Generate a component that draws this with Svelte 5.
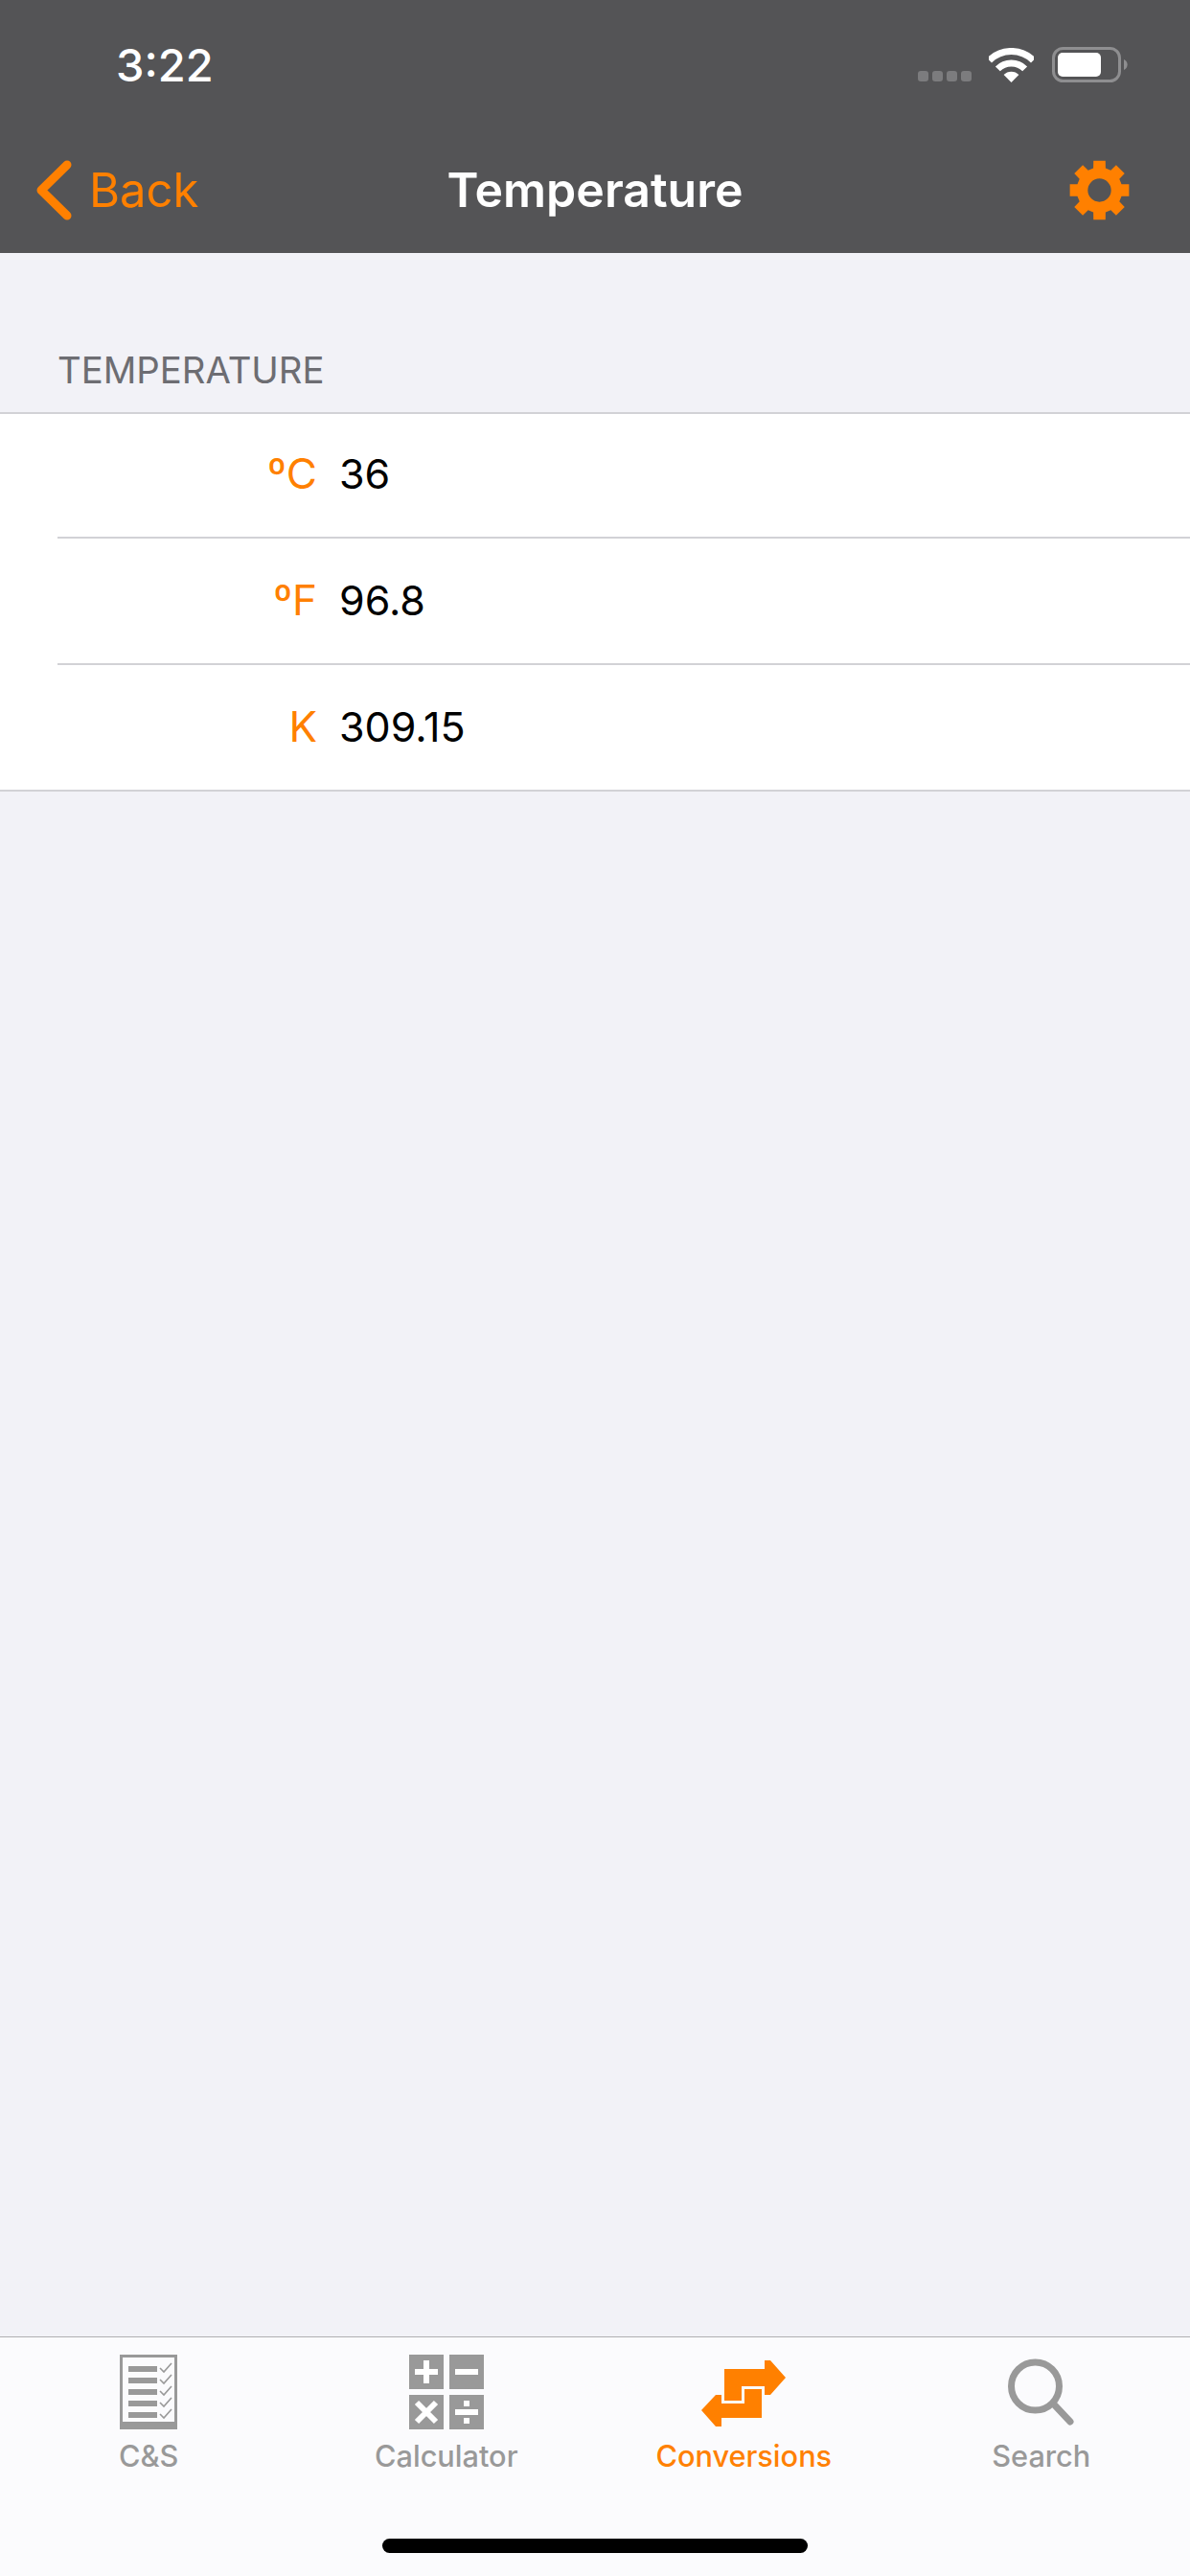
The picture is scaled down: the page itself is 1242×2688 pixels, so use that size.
<script>
	const rows = [
		{ unit: 'ºC', value: '36' },
		{ unit: 'ºF', value: '96.8' },
		{ unit: 'K', value: '309.15' }
	];

	const tabs = ['C&S', 'Calculator', 'Conversions', 'Search'];
	const checkRows = [0, 12, 24, 36, 48];

	// 8 teeth around the centre of a 62px box
	function gearPath() {
		const c = 31;
		const pts = [];
		for (let i = 0; i < 8; i++) {
			const a = (i * Math.PI) / 4 - Math.PI / 2;
			const at = (r, d) => `${(c + r * Math.cos(a + d)).toFixed(2)} ${(c + r * Math.sin(a + d)).toFixed(2)}`;
			pts.push(at(23.5, -0.27), at(31, -0.2), at(31, 0.2), at(23.5, 0.27));
		}
		return `M${pts.join('L')}Z M${c - 12} ${c}a12 12 0 1 0 24 0a12 12 0 1 0 -24 0Z`;
	}
</script>

<div class="page">
	<header class="top">
		<div class="status">
			<span class="time">3:22</span>
			<div class="status-icons">
				<div class="dots"><i></i><i></i><i></i><i></i></div>
				<svg width="47" height="36" viewBox="0 0 47 36">
					<path d="M0.5 13A32.5 32.5 0 0 1 46.5 13" fill="none" stroke="#fff" stroke-width="7" />
					<path d="M9.36 21.86A20 20 0 0 1 37.64 21.86" fill="none" stroke="#fff" stroke-width="7" />
					<path d="M23.5 36L15.6 28.1A11 11 0 0 1 31.4 28.1Z" fill="#fff" />
				</svg>
				<svg width="79" height="37" viewBox="0 0 79 37">
					<rect x="1.5" y="1.5" width="69" height="34" rx="10" fill="none" stroke="#8e8e90" stroke-width="3" />
					<rect x="6" y="6" width="45" height="25" rx="5" fill="#fff" />
					<path d="M75 13a6 6 0 0 1 0 11Z" fill="#8e8e90" />
				</svg>
			</div>
		</div>
		<nav class="nav">
			<div class="back">
				<svg width="37" height="63" viewBox="0 0 37 63">
					<path d="M32 5L5 31.5L32 58" fill="none" stroke="#ff8000" stroke-width="9" stroke-linecap="round" stroke-linejoin="round" />
				</svg>
				<span>Back</span>
			</div>
			<h1>Temperature</h1>
			<svg class="gear" width="63" height="63" viewBox="0 0 62 62">
				<path d={gearPath()} fill="#ff8000" fill-rule="evenodd" />
			</svg>
		</nav>
	</header>

	<main class="content">
		<div class="section-title">TEMPERATURE</div>
		<div class="list">
			{#each rows as row}
				<div class="row">
					<span class="unit">{row.unit}</span>
					<span class="value">{row.value}</span>
				</div>
			{/each}
		</div>
	</main>

	<footer class="tabbar">
		<div class="tabs">
			{#each tabs as tab, i}
				<div class="tab" class:active={i === 2}>
					{#if i === 0}
						<svg width="60" height="78" viewBox="0 0 60 78">
							<path fill-rule="evenodd" d="M0 0H60V78H0ZM3 3V70H57V3Z" fill="#999" />
							{#each checkRows as y}
								<rect x="9" y={12 + y} width="30" height="6" fill="#999" />
								<path d="M42 {14 + y}L46 {18 + y}L54 {9 + y}" fill="none" stroke="#999" stroke-width="1.6" />
							{/each}
						</svg>
					{:else if i === 1}
						<svg width="78" height="78" viewBox="0 0 78 78">
							<path fill="#999" d="M0 0H36V36H0ZM42 0H78V36H42ZM0 42H36V78H0ZM42 42H78V78H42Z" />
							<path fill="#fff" d="M15 6H21V15H30V21H21V30H15V21H6V15H15ZM48 15H72V21H48ZM48 57H72V63H48ZM57 48H63V54H57ZM57 66H63V72H57Z" />
							<path d="M8 50L28 70M28 50L8 70" stroke="#fff" stroke-width="6" />
						</svg>
					{:else if i === 2}
						<svg width="88" height="78" viewBox="0 0 88 78">
							<path fill="#ff8000" d="M24 15H66V6H72L88 24L72 42H66V33H42V48H24Z" />
							<path fill="#ff8000" d="M45 36H63V66H21V75H15L0 58L15 42H21V51H45Z" />
						</svg>
					{:else}
						<svg width="69" height="78" viewBox="0 0 69 78">
							<circle cx="28.5" cy="33" r="25" fill="none" stroke="#999" stroke-width="7" />
							<path d="M49 53L65 70" stroke="#999" stroke-width="7" stroke-linecap="round" />
						</svg>
					{/if}
					<span class="tab-label">{tab}</span>
				</div>
			{/each}
		</div>
		<div class="home-bar"></div>
	</footer>
</div>

<style>
	:global(body) {
		margin: 0;
		background: #f2f2f7;
	}

	.page {
		display: flex;
		flex-direction: column;
		height: 2688px;
		font-family: Inter, "Liberation Sans", sans-serif;
		background: #f2f2f7;
	}

	.top {
		height: 264px;
		background: #545456;
	}

	.status {
		display: flex;
		justify-content: space-between;
		height: 132px;
		box-sizing: border-box;
		padding: 38px 65px 0 121px;
		color: #fff;
	}

	.time {
		font-size: 47px;
		font-weight: 500;
		line-height: 60px;
	}

	.status-icons {
		display: flex;
		align-items: flex-end;
		gap: 19px;
		align-self: flex-start;
		margin-top: 11px;
	}

	.dots {
		display: flex;
		gap: 4px;
		margin: 0 -1px 1px 0;
	}

	.dots i {
		width: 11px;
		height: 11px;
		border-radius: 3px;
		background: #7c7c7e;
	}

	.nav {
		display: grid;
		grid-template-columns: 1fr auto 1fr;
		align-items: center;
		height: 132px;
		padding: 0 38px;
	}

	.back {
		display: flex;
		align-items: center;
		gap: 18px;
		color: #ff8000;
		font-size: 49px;
	}

	.nav h1 {
		margin: 0;
		color: #fff;
		font-size: 50px;
		font-weight: 600;
	}

	.gear {
		justify-self: end;
		margin-right: 25px;
	}

	.content {
		flex: 1;
	}

	.section-title {
		padding: 99px 0 21px 60px;
		font-size: 38.3px;
		line-height: 46px;
		color: #6d6d72;
	}

	.list {
		background: #fff;
		box-shadow: inset 0 2px #d2d2d6;
	}

	.row {
		display: flex;
		align-items: center;
		gap: 23px;
		height: 132px;
		box-sizing: border-box;
		border-bottom: 2px solid #d2d2d6;
		margin-left: 60px;
		padding-bottom: 3px;
	}

	.row:last-child {
		margin-left: 0;
		padding-left: 60px;
	}

	.unit {
		width: 271px;
		text-align: right;
		color: #ff8000;
		font-size: 44px;
	}

	.value {
		color: #000;
		font-size: 43px;
	}

	.tabbar {
		height: 250px;
		box-sizing: border-box;
		border-top: 1px solid #b0b0b2;
		background: #fbfbfd;
	}

	.tabs {
		display: grid;
		grid-template-columns: repeat(4, 1fr);
		padding-top: 18px;
	}

	.tab {
		display: flex;
		flex-direction: column;
		align-items: center;
		gap: 10px;
		color: #999;
	}

	.tab.active {
		color: #ff8000;
	}

	.tab-label {
		font-size: 30.7px;
		font-weight: 500;
		line-height: 36px;
	}

	.home-bar {
		width: 444px;
		height: 15px;
		margin: 68px auto 0;
		border-radius: 8px;
		background: #000;
	}
</style>
